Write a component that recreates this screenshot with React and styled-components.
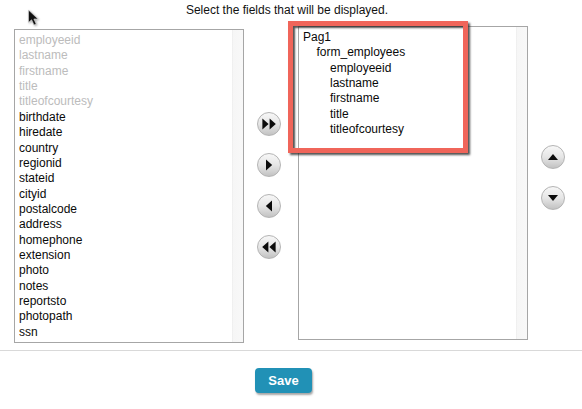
import React from 'react'
import styled, { createGlobalStyle } from 'styled-components'

const GlobalStyle = createGlobalStyle`
  html, body {
    margin: 0;
    background: #fff;
    font-family: "Liberation Sans", Arial, sans-serif;
  }
`

const available = [
  ['employeeid', true],
  ['lastname', true],
  ['firstname', true],
  ['title', true],
  ['titleofcourtesy', true],
  ['birthdate'],
  ['hiredate'],
  ['country'],
  ['regionid'],
  ['stateid'],
  ['cityid'],
  ['postalcode'],
  ['address'],
  ['homephone'],
  ['extension'],
  ['photo'],
  ['notes'],
  ['reportsto'],
  ['photopath'],
  ['ssn'],
]

const tree = [
  ['Pag1', 0],
  ['form_employees', 1],
  ['employeeid', 2],
  ['lastname', 2],
  ['firstname', 2],
  ['title', 2],
  ['titleofcourtesy', 2],
]

const Triangle = ({ dir, x = 0 }) => {
  const points = {
    right: '-3,-5.5 3.2,0 -3,5.5',
    left: '3,-5.5 -3.2,0 3,5.5',
    up: '-5,3 0,-3 5,3',
    down: '-5,-3 0,3 5,-3',
  }
  return <polygon points={points[dir]} transform={`translate(${11 + x} 11)`} fill="#0c0c0c" />
}

const RoundButton = ({ dir, double }) => (
  <Round type="button">
    <svg width="22" height="22" viewBox="0 0 22 22">
      {double ? (
        <>
          <Triangle dir={dir} x={-3.6} />
          <Triangle dir={dir} x={3.6} />
        </>
      ) : (
        <Triangle dir={dir} />
      )}
    </svg>
  </Round>
)

const App = () => {
  return (
    <Page>
      <GlobalStyle />
      <Cursor width="13" height="18" viewBox="0 0 13 18">
        <path d="M1.5 1 L1.5 13.5 L4.6 10.8 L7 16 L9.2 15 L6.9 10 L11 10 Z" fill="#111" stroke="#ddd" strokeWidth="0.6" />
      </Cursor>
      <Title>Select the fields that will be displayed.</Title>
      <Columns>
        <AvailableBox>
          {available.map(([name, used]) => (
            <Row key={name} $used={used}>{name}</Row>
          ))}
        </AvailableBox>
        <ArrowColumn>
          <RoundButton dir="right" double />
          <RoundButton dir="right" />
          <RoundButton dir="left" />
          <RoundButton dir="left" double />
        </ArrowColumn>
        <TreeWrap>
          <ListBox>
            {tree.map(([name, level]) => (
              <Row key={name + level} $level={level}>{name}</Row>
            ))}
          </ListBox>
          <Highlight />
        </TreeWrap>
        <OrderColumn>
          <RoundButton dir="up" />
          <RoundButton dir="down" />
        </OrderColumn>
      </Columns>
      <Divider />
      <Footer>
        <SaveButton type="button">Save</SaveButton>
      </Footer>
    </Page>
  )
}

const Page = styled.div`
  position: relative;
  width: 582px;
  height: 409px;
  overflow: hidden;
`

const Cursor = styled.svg`
  position: absolute;
  left: 27px;
  top: 9px;
  filter: drop-shadow(1px 1px 1px rgba(0, 0, 0, 0.35));
`

const Title = styled.div`
  height: 26px;
  padding: 3px 8px 0 0;
  box-sizing: border-box;
  text-align: center;
  font-size: 12px;
  line-height: 14px;
  color: #111;
`

const Columns = styled.div`
  display: flex;
  align-items: flex-start;
  padding-left: 14px;
  height: 321px;
`

const ListBox = styled.div`
  box-sizing: border-box;
  width: 230px;
  height: 314px;
  border: 1px solid #a6a6a6;
  padding: 3px 0 0 4px;
  background: linear-gradient(to right, #fff 217px, #e9e9e9 217px, #f6f6f6 218px, #f8f8f8 228px);
`

const AvailableBox = styled(ListBox)`
  margin-top: 3px;
`

const Row = styled.div`
  height: 15.37px;
  line-height: 15.37px;
  font-size: 12px;
  white-space: nowrap;
  color: ${(p) => (p.$used ? '#bcbcbc' : '#0a0a0a')};
  padding-left: ${(p) => (p.$level || 0) * 13.5}px;
`

const ArrowColumn = styled.div`
  box-sizing: border-box;
  width: 54px;
  padding: 86px 4px 0 0;
  display: flex;
  flex-direction: column;
  align-items: center;
  gap: 17px;
`

const TreeWrap = styled.div`
  position: relative;
`

const Highlight = styled.div`
  position: absolute;
  left: -10px;
  top: -5px;
  width: 180px;
  height: 132px;
  box-sizing: border-box;
  border: 5px solid #f0655a;
  box-shadow: 2px 2px 2px rgba(40, 40, 40, 0.8), inset 2px 2px 2px rgba(40, 40, 40, 0.8);
`

const OrderColumn = styled.div`
  padding: 119px 0 0 13px;
  display: flex;
  flex-direction: column;
  gap: 17px;
`

const Round = styled.button`
  width: 24px;
  height: 24px;
  padding: 0;
  border: 1px solid #b4b4b4;
  border-radius: 50%;
  box-sizing: border-box;
  background: linear-gradient(to bottom, #f7f7f7 0%, #e6e6e6 50%, #c2c2c2 100%);
  display: flex;
  align-items: center;
  justify-content: center;

  svg {
    flex: none;
  }
`

const Divider = styled.div`
  height: 1px;
  margin-top: 3px;
  background: #d9d9d9;
`

const Footer = styled.div`
  padding: 17px 0 0 255px;
`

const SaveButton = styled.button`
  width: 57px;
  height: 25px;
  padding: 0 0 1px;
  border: 0;
  border-radius: 4px;
  background: #2191b6;
  color: #fff;
  font-family: "Liberation Sans", Arial, sans-serif;
  font-size: 13px;
  font-weight: bold;
  box-shadow: 1px 2px 2px rgba(80, 80, 80, 0.5);
`

export default App
